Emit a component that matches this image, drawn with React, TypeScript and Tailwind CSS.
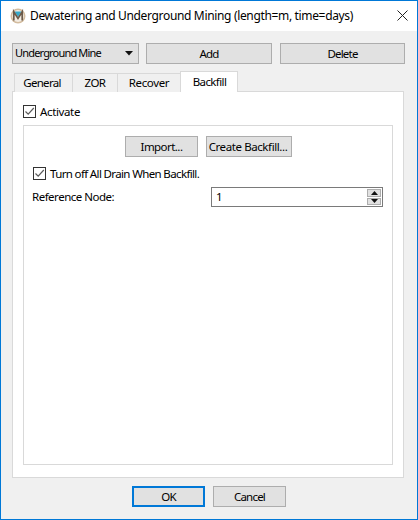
import React from 'react';

const font = "font-['Noto_Sans','Open_Sans',sans-serif]";

const Check = () => (
  <span className="w-[13px] h-[13px] border border-[#333333] bg-white flex items-center justify-center shrink-0">
    <svg width="11" height="11" viewBox="0 0 11 11" fill="none">
      <path d="M1.5 5.5 L4.2 8.2 L9.8 2" stroke="#5a5a5a" strokeWidth="1.2" />
    </svg>
  </span>
);

const Btn = ({ label, className }: { label: string; className: string }) => (
  <div className={`flex items-center justify-center bg-[#e1e1e1] border border-[#adadad] text-[11.5px] text-black ${className}`}>
    {label}
  </div>
);

const Tab = ({ label, className }: { label: string; className: string }) => (
  <div className={`h-[19px] mt-[2px] flex items-center justify-center border border-b-0 border-[#d9d9d9] bg-[#f0f0f0] -mr-px text-[11.5px] ${className}`}>
    {label}
  </div>
);

export default function App() {
  return (
    <div className={`w-[418px] h-[520px] border border-[#0078d7] bg-[#f0f0f0] flex flex-col overflow-hidden text-black ${font}`}>
      {/* title bar */}
      <div className="h-[30px] bg-white flex items-center shrink-0">
        <svg className="ml-[9px] shrink-0" width="16" height="16" viewBox="0 0 16 16">
          <circle cx="8" cy="8" r="7.5" fill="#d3bc9f" />
          <circle cx="8" cy="8" r="6" fill="#f3ece2" />
          <path d="M4.6 3.6 H11.4 L8 9 Z" fill="#35a9cb" />
          <path d="M3.8 12.5 V3.8 L8 10.5 L12.2 3.8 V12.5" fill="none" stroke="#6b5a4a" strokeWidth="1.7" />
        </svg>
        <span className="ml-[4px] text-[12px] tracking-[-0.34px] whitespace-nowrap">Dewatering and Underground Mining (length=m, time=days)</span>
        <svg className="ml-auto mr-[9px] mb-px" width="11" height="11" viewBox="0 0 11 11" fill="none">
          <path d="M0.5 0.5 L10.5 10.5 M10.5 0.5 L0.5 10.5" stroke="#222222" strokeWidth="1" />
        </svg>
      </div>

      <div className="flex-1 flex flex-col px-[11px] pt-[12px]">
        {/* top row */}
        <div className="flex h-[21px] shrink-0">
          <div className="w-[127px] flex items-center justify-between bg-[#e1e1e1] border border-[#adadad] pl-[2px] pr-[5px] text-[11px] tracking-[-0.82px]">
            <span>Underground Mine</span>
            <svg width="8" height="5" viewBox="0 0 8 5"><path d="M0 0 H8 L4 4.5 Z" fill="#111111" /></svg>
          </div>
          <Btn label="Add" className="ml-[7px] w-[126px] tracking-[-0.9px]" />
          <Btn label="Delete" className="ml-[8px] w-[125px] tracking-[-0.8px]" />
        </div>

        {/* tabs */}
        <div className="flex mt-[7px] ml-[2px] h-[21px] shrink-0 relative z-10 -mb-px">
          <Tab label="General" className="w-[59px] pr-[3px] tracking-[-0.7px]" />
          <Tab label="ZOR" className="w-[46px] tracking-[-0.6px]" />
          <Tab label="Recover" className="w-[64px] tracking-[-0.35px]" />
          <div className="w-[58px] h-[21px] pl-[1px] flex items-center justify-center border border-b-0 border-[#d9d9d9] bg-white text-[11.5px] tracking-[-0.6px]">
            Backfill
          </div>
        </div>

        {/* pane */}
        <div className="w-[392px] h-[387px] bg-white border border-[#d9d9d9] flex flex-col px-[10px] pt-[13px] pb-[12px]">
          <label className="flex items-center h-[13px] text-[11.5px] tracking-[-0.36px] shrink-0">
            <Check />
            <span className="ml-[4px]">Activate</span>
          </label>
          <div className="mt-[7px] flex-1 border border-[#d9d9d9] flex flex-col pl-[8px] pt-[10px]">
            <div className="flex ml-[93px] h-[21px]">
              <Btn label="Import..." className="w-[73px] tracking-[-0.55px]" />
              <Btn label="Create Backfill..." className="ml-[8px] w-[86px] pr-[2px] whitespace-nowrap tracking-[-0.41px]" />
            </div>
            <label className="flex items-center mt-[10px] ml-[1px] h-[13px] text-[11.5px] tracking-[-0.64px]">
              <Check />
              <span className="ml-[4px]">Turn off All Drain When Backfill.</span>
            </label>
            <div className="flex items-center mt-[7px] h-[20px]">
              <span className="text-[11.5px] tracking-[-0.49px] w-[179px]">Reference Node:</span>
              <div className="w-[172px] h-[20px] border border-[#7a7a7a] bg-white flex items-center justify-between pl-[4px] pr-[1px] text-[11.5px]">
                <span>1</span>
                <div className="w-[14px] h-[16px] flex flex-col gap-px">
                  <div className="flex-1 bg-[#e1e1e1] border border-[#adadad] flex items-center justify-center">
                    <svg width="7" height="4" viewBox="0 0 7 4"><path d="M3.5 0 L7 4 H0 Z" fill="#111111" /></svg>
                  </div>
                  <div className="flex-1 bg-[#e1e1e1] border border-[#adadad] flex items-center justify-center">
                    <svg width="7" height="4" viewBox="0 0 7 4"><path d="M0 0 H7 L3.5 4 Z" fill="#111111" /></svg>
                  </div>
                </div>
              </div>
            </div>
          </div>
        </div>

        {/* footer */}
        <div className="flex justify-center mt-[8px]">
          <div className="w-[73px] h-[21px] bg-[#e1e1e1] border-2 border-[#0078d7] flex items-center justify-center text-[11.5px] tracking-[-0.9px]">OK</div>
          <Btn label="Cancel" className="ml-[8px] w-[73px] h-[21px] tracking-[-0.8px]" />
        </div>
      </div>
    </div>
  );
}
